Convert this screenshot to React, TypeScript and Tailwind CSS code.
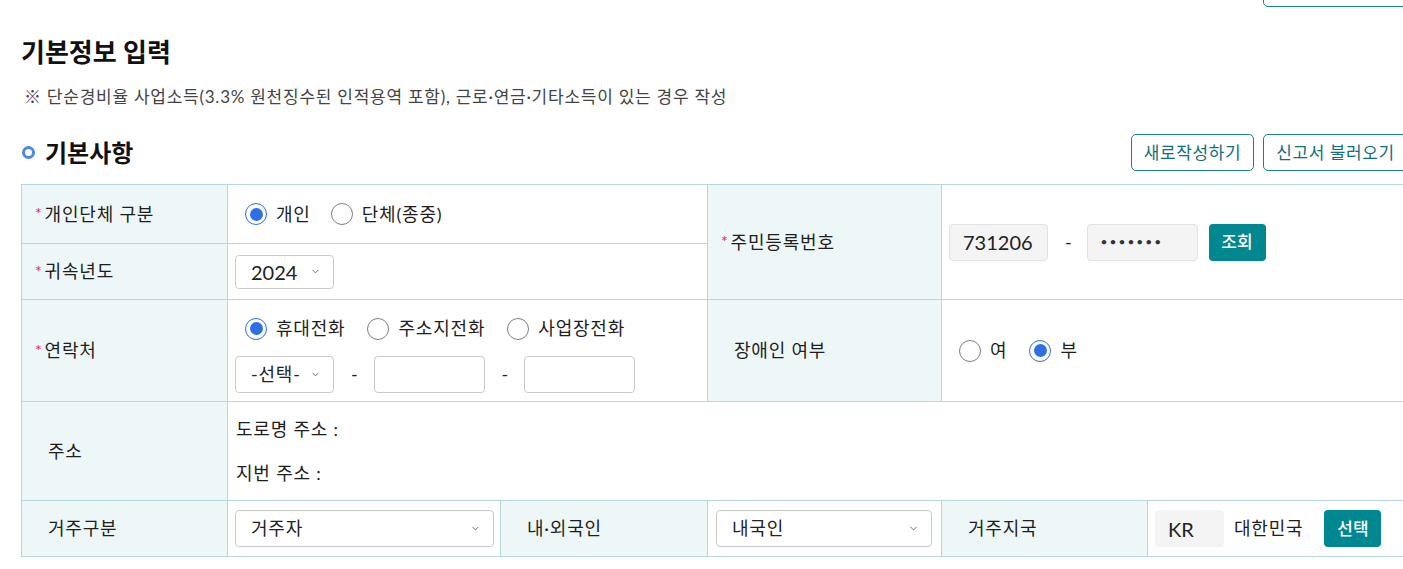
import { ChevronDown } from "lucide-react";

const FONT = "font-['Lato','Noto_Sans_CJK_KR',sans-serif]";

function Radio({ checked, label }: { checked?: boolean; label: string }) {
  return (
    <label className="flex items-center gap-[9px]">
      <span
        className={`w-[22px] h-[22px] rounded-full border bg-white flex items-center justify-center ${
          checked ? "border-[#2f6fe4]" : "border-[#808080]"
        }`}
      >
        {checked && <span className="w-[13px] h-[13px] rounded-full bg-[#2f6fe4]" />}
      </span>
      <span className="text-[#1e1e1e]">{label}</span>
    </label>
  );
}

function Select({ value, width }: { value: string; width: string }) {
  return (
    <div
      className={`${width} h-[37px] border border-[#c9c9c9] rounded-[4px] bg-white flex items-center justify-between pl-[15px] pr-[12px] text-[#222]`}
    >
      <span>{value}</span>
      <ChevronDown className="w-[11px] h-[11px] text-[#666]" strokeWidth={2} />
    </div>
  );
}

function Label({ text, required }: { text: string; required?: boolean }) {
  return (
    <div
      className={`bg-[#eef7f7] border-r border-b border-[#b6d9dd] flex items-center text-[#1e1e1e] ${
        required ? "pl-[13px]" : "pl-[26px]"
      }`}
    >
      {required && <span className="text-[#e5195e] text-[16px] mr-[2px] -mt-[2px]">*</span>}
      {text}
    </div>
  );
}

const cell = "border-r border-b border-[#b6d9dd] bg-white flex items-center";

export default function App() {
  return (
    <div className={`w-[1403px] h-[569px] overflow-hidden bg-white text-[#1e1e1e] ${FONT}`}>
      <div className="w-[1408px] pl-[21px]">
        <div className="flex justify-end">
          <div className="w-[145px] h-[37px] -mt-[30px] border border-[#1a7f89] rounded-[5px]" />
        </div>

        <h1 className="mt-[29px] text-[26px] leading-[32px] font-bold text-[#111]">기본정보 입력</h1>
        <p className="mt-[18px] ml-[3px] text-[17px] tracking-[0.75px] leading-[22px] text-[#444]">
          ※ 단순경비율 사업소득(3.3% 원천징수된 인적용역 포함), 근로·연금·기타소득이 있는 경우 작성
        </p>

        <div className="mt-[26px] h-[37px] flex items-center justify-between">
          <div className="flex items-center">
            <span className="ml-[1px] w-[13px] h-[13px] rounded-full border-[3px] border-[#4d87ea]" />
            <h2 className="ml-[10px] text-[24px] font-bold text-[#111] leading-none">기본사항</h2>
          </div>
          <div className="flex gap-[9px] h-[37px] text-[17px] tracking-[0.6px]">
            <button className="w-[123px] border border-[#1a7f89] rounded-[5px] text-[#0f6f79] bg-white">
              새로작성하기
            </button>
            <button className="w-[145px] border border-[#1a7f89] rounded-[5px] text-[#0f6f79] bg-white">
              신고서 불러오기
            </button>
          </div>
        </div>

        <div className="mt-[13px] grid grid-cols-[206px_273px_207px_234px_206px_1fr] grid-rows-[59px_56px_102px_99px_56px] border-t border-l border-[#b6d9dd] text-[18px] tracking-[0.8px]">
          {/* row 1 */}
          <Label text="개인단체 구분" required />
          <div className={`${cell} col-span-2 pl-[17px] gap-[20px]`}>
            <Radio checked label="개인" />
            <Radio label="단체(종중)" />
          </div>
          <div className="row-span-2 grid">
            <Label text="주민등록번호" required />
          </div>
          <div className={`${cell} row-span-2 col-span-2 pl-[7px]`}>
            <div className="w-[99px] h-[37px] rounded-[4px] border border-[#e2e2e2] bg-[#f4f4f4] flex items-center pl-[13px] text-[20px] tracking-normal text-[#222]">
              731206
            </div>
            <span className="ml-[17px] mr-[14px]">-</span>
            <div className="w-[111px] h-[37px] rounded-[4px] border border-[#e2e2e2] bg-[#f4f4f4] flex items-center pl-[13px] text-[12px] tracking-[2px] text-[#333]">
              •••••••
            </div>
            <button className="ml-[11px] w-[57px] h-[37px] rounded-[4px] bg-[#008790] text-white text-[17px] tracking-normal font-medium">
              조회
            </button>
          </div>

          {/* row 2 */}
          <Label text="귀속년도" required />
          <div className={`${cell} col-span-2 pl-[7px]`}>
            <div className="w-[99px] h-[34px] border border-[#c9c9c9] rounded-[4px] bg-white flex items-center justify-between pl-[15px] pr-[12px] text-[20px] tracking-normal text-[#222]">
              <span>2024</span>
              <ChevronDown className="w-[11px] h-[11px] text-[#666]" strokeWidth={2} />
            </div>
          </div>

          {/* row 3 */}
          <Label text="연락처" required />
          <div className={`${cell} col-span-2 flex-col !items-start justify-start pt-[15px] gap-[14px]`}>
            <div className="flex pl-[17px] gap-[22px]">
              <Radio checked label="휴대전화" />
              <Radio label="주소지전화" />
              <Radio label="사업장전화" />
            </div>
            <div className="flex items-center pl-[7px]">
              <Select value="-선택-" width="w-[99px]" />
              <span className="ml-[17px] mr-[15px]">-</span>
              <div className="w-[111px] h-[37px] border border-[#c9c9c9] rounded-[4px] bg-white" />
              <span className="ml-[17px] mr-[15px]">-</span>
              <div className="w-[111px] h-[37px] border border-[#c9c9c9] rounded-[4px] bg-white" />
            </div>
          </div>
          <Label text="장애인 여부" />
          <div className={`${cell} col-span-2 pl-[17px] gap-[22px]`}>
            <Radio label="여" />
            <Radio checked label="부" />
          </div>

          {/* row 4 */}
          <Label text="주소" />
          <div className={`${cell} col-span-5 flex-col !items-start justify-center gap-[20px] pl-[8px]`}>
            <span className="leading-[24px]">도로명 주소 :</span>
            <span className="leading-[24px]">지번 주소 :</span>
          </div>

          {/* row 5 */}
          <Label text="거주구분" />
          <div className={`${cell} pl-[7px]`}>
            <Select value="거주자" width="w-[259px]" />
          </div>
          <Label text="내·외국인" />
          <div className={`${cell} pl-[8px]`}>
            <Select value="내국인" width="w-[216px]" />
          </div>
          <Label text="거주지국" />
          <div className={`${cell} pl-[7px]`}>
            <div className="w-[69px] h-[37px] rounded-[4px] bg-[#f4f4f4] flex items-center pl-[13px] text-[20px] tracking-normal text-[#222]">
              KR
            </div>
            <span className="ml-[10px]">대한민국</span>
            <button className="ml-[21px] w-[57px] h-[37px] rounded-[4px] bg-[#008790] text-white text-[17px] tracking-normal font-medium">
              선택
            </button>
          </div>
        </div>
      </div>
    </div>
  );
}
